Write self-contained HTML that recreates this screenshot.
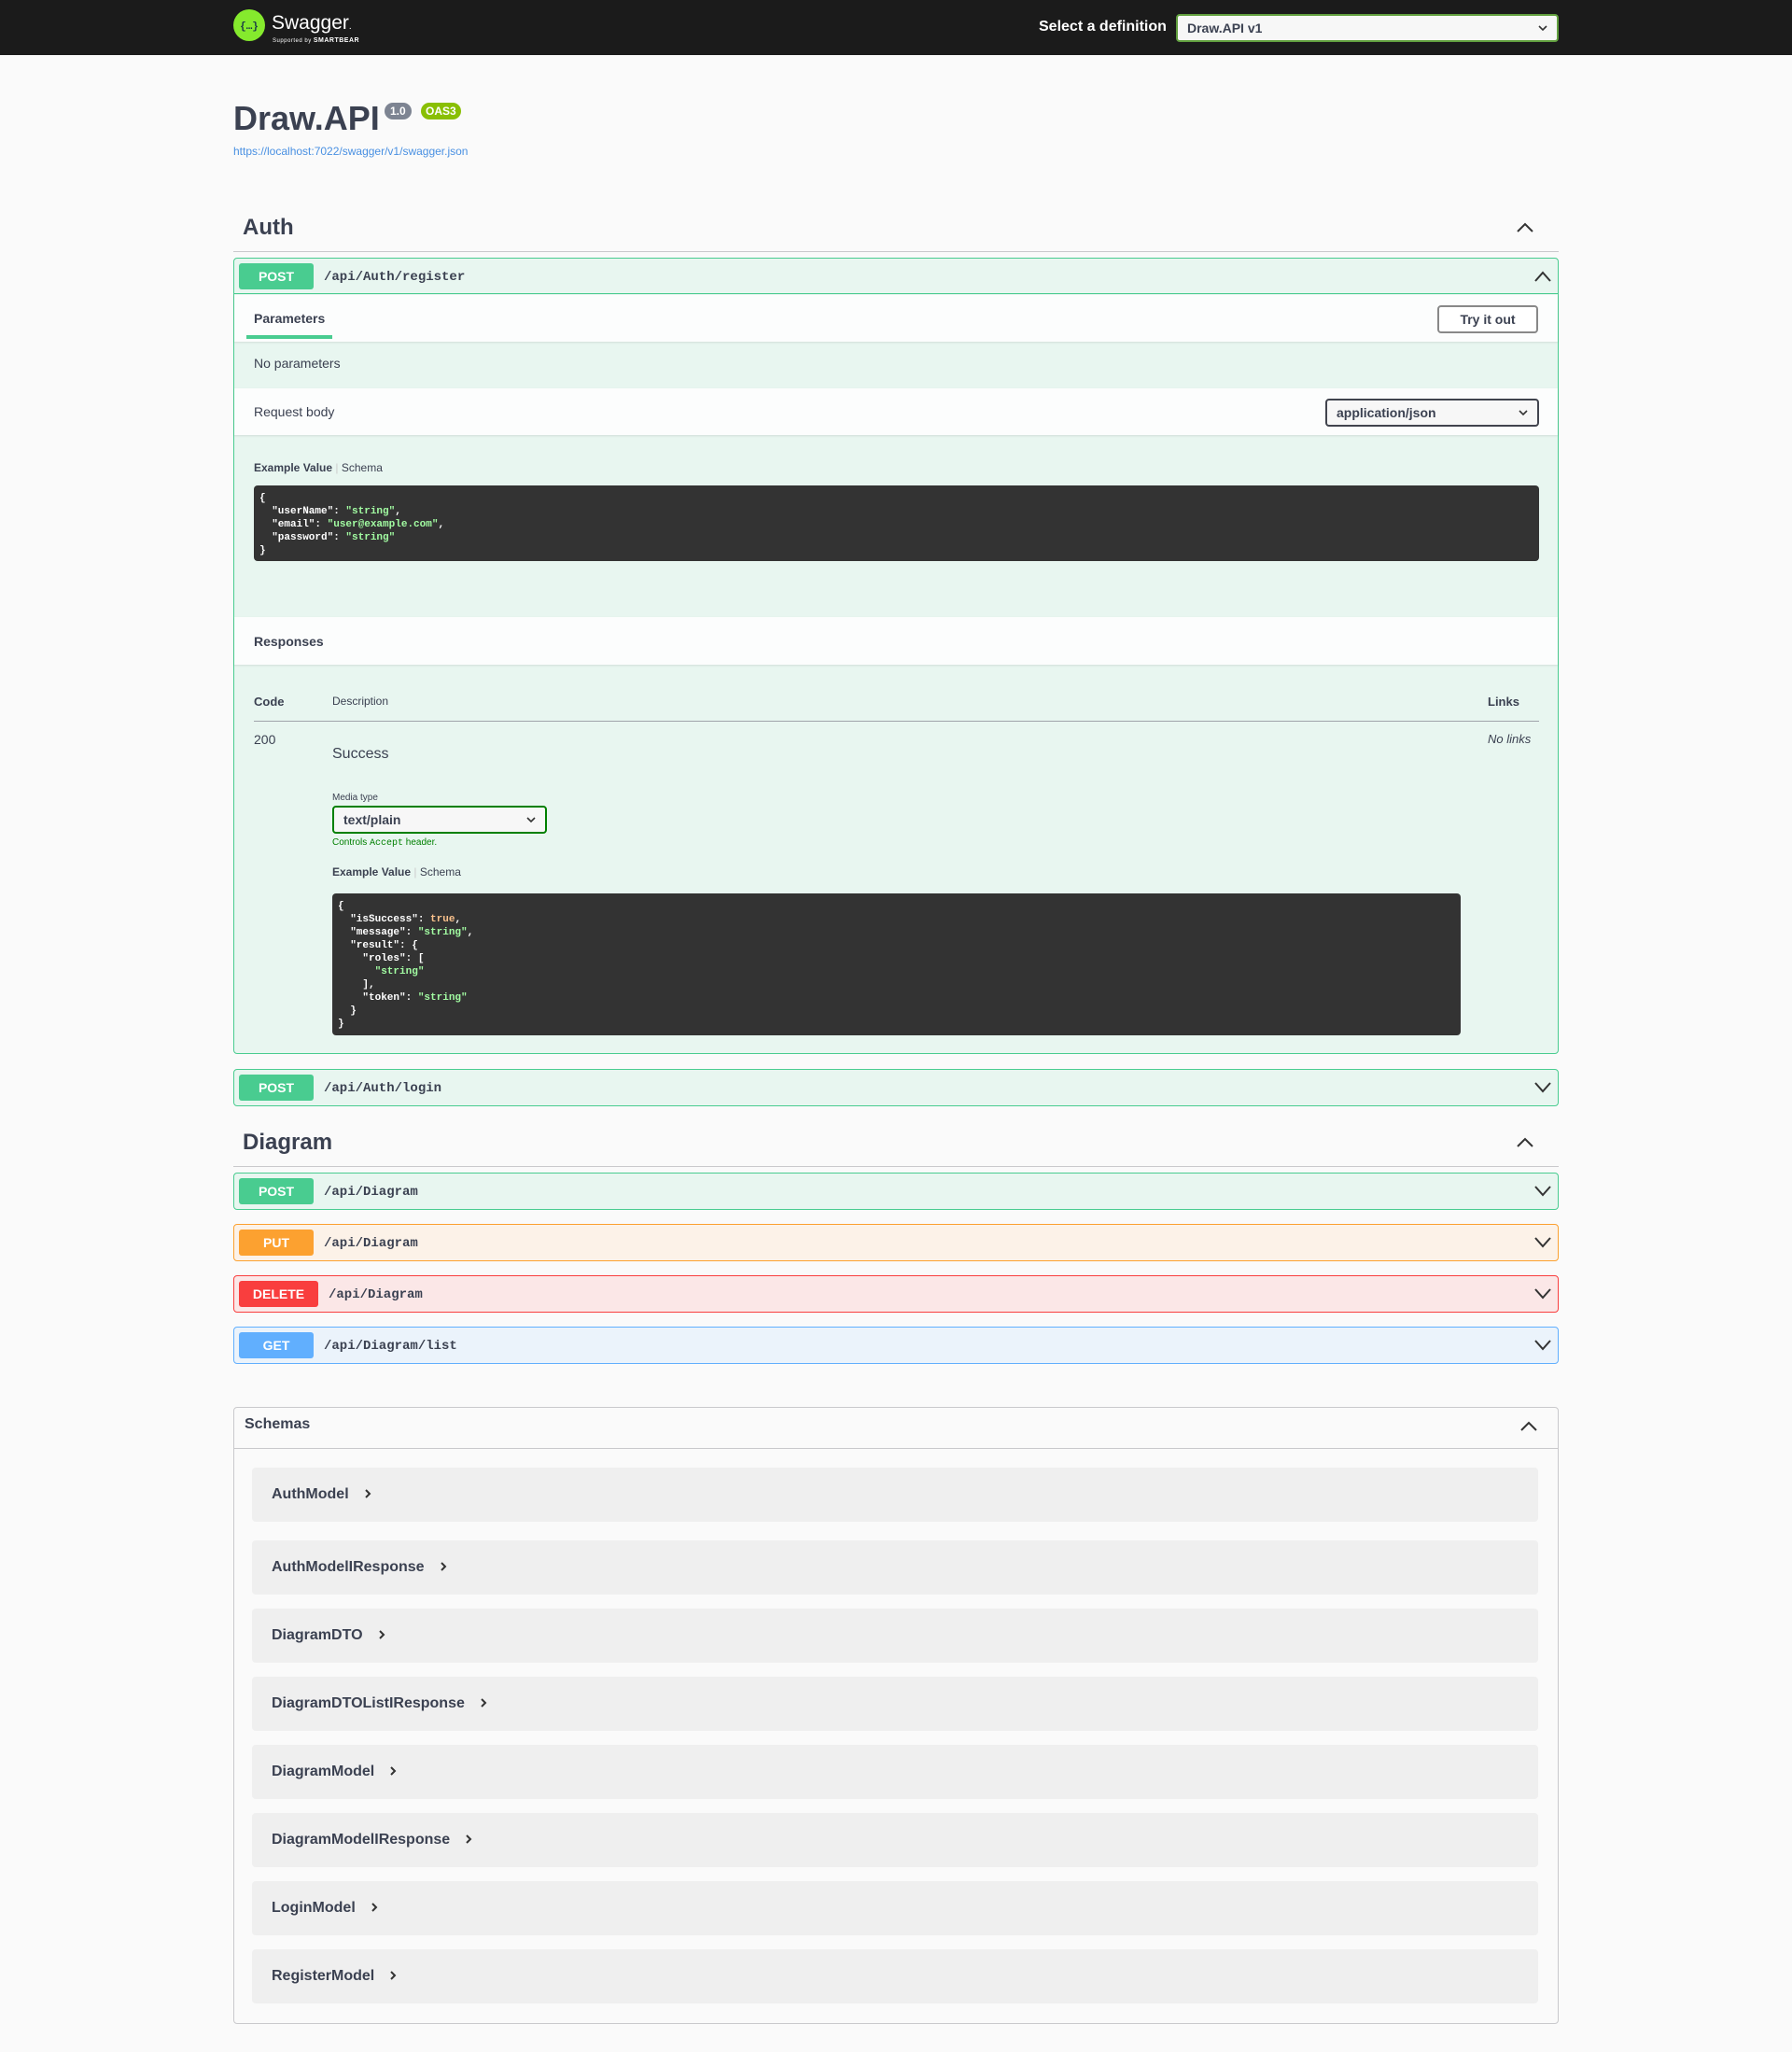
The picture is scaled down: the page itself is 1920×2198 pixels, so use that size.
<!DOCTYPE html>
<html><head><meta charset="utf-8"><style>
*{box-sizing:border-box;margin:0;padding:0}
body{width:1920px;height:2198px;background:#fafafa;font-family:"Liberation Sans",sans-serif;color:#3b4151;position:relative;overflow:hidden}
.a{position:absolute}
.mono{font-family:"Liberation Mono",monospace}
.ob{position:absolute;left:250px;width:1420px;border:1px solid;border-radius:4px}
.sum{position:absolute;left:0;right:0;top:0;height:38px}
.m{position:absolute;left:5px;top:5px;height:28px;width:80px;border-radius:3px;color:#fff;font-weight:bold;font-size:14px;text-align:center;line-height:28px}
.p{position:absolute;left:96px;top:1px;line-height:38px;font-size:14px;font-weight:bold;font-family:"Liberation Mono",monospace;color:#3b4151}
.chev{position:absolute;right:6px;top:11px}
.code{position:absolute;background:#333;border-radius:4px;color:#fff;font-family:"Liberation Mono",monospace;font-size:11px;font-weight:bold;line-height:14px;padding:7px 6px}
.g{color:#a2fca2}.o{color:#fcc28c}
.sch{position:absolute;left:270px;width:1378px;height:58px;background:#efefef;border-radius:4px;font-size:16px;font-weight:bold;line-height:58px;padding-left:21px;color:#3b4151}
.sch svg{margin-left:16px;vertical-align:-1px}
.dd{position:absolute;right:10px;top:9px}
</style></head><body>
<div class="a" style="left:0;top:0;width:1920px;height:59px;background:#1b1b1b"></div>
<svg class="a" style="left:250px;top:10px" width="34" height="34" viewBox="0 0 34 34"><circle cx="17" cy="17" r="17" fill="#85ea2d"/><text x="17" y="21" font-size="11" text-anchor="middle" fill="#173647" font-family="Liberation Mono" font-weight="bold">{…}</text></svg>
<div class="a" style="left:291px;top:13px;color:#fff;font-size:21px">Swagger<span style="font-size:10px">.</span></div>
<div class="a" style="left:292px;top:40px;color:#fff;font-size:6px;letter-spacing:.5px">Supported by <b style="font-size:7px">SMARTBEAR</b></div>
<div class="a" style="left:1113px;top:20px;color:#fff;font-size:16px;font-weight:bold">Select a definition</div>
<div class="a" style="left:1260px;top:15px;width:410px;height:30px;background:#f7f7f7;border:2px solid #62a03f;border-radius:4px;font-size:14px;font-weight:bold;line-height:26px;padding-left:10px;color:#3b4151">Draw.API v1<svg class="dd" width="10" height="8" viewBox="0 0 10 8"><path d="M1 2 L5 6 L9 2" fill="none" stroke="#333" stroke-width="1.6"/></svg></div>

<div class="a" style="left:250px;top:106px;font-size:36px;font-weight:bold">Draw.API</div>
<div class="a" style="left:412px;top:110px;background:#7d8492;color:#fff;font-size:12px;font-weight:bold;border-radius:57px;padding:2px 6px">1.0</div>
<div class="a" style="left:451px;top:110px;background:#89bf04;color:#fff;font-size:12px;font-weight:bold;border-radius:57px;padding:2px 5px">OAS3</div>
<div class="a" style="left:250px;top:155px;font-size:12px;color:#4990e2">https://localhost:7022/swagger/v1/swagger.json</div>

<div class="a" style="left:260px;top:230px;font-size:24px;font-weight:bold">Auth</div>
<svg class="a" style="left:1624px;top:236px" width="20" height="14" viewBox="0 0 20 14"><path d="M2 12 L10 4 L18 12" fill="none" stroke="#333" stroke-width="2"/></svg>
<div class="a" style="left:250px;top:269px;width:1420px;height:1px;background:#c9c9cc"></div>

<div class="ob" style="top:276px;height:853px;border-color:#49cc90;background:#e8f6f0">
 <div class="sum" style="border-bottom:1px solid #49cc90"><div class="m" style="background:#49cc90">POST</div><div class="p">/api/Auth/register</div>
 <svg class="chev" width="20" height="16" viewBox="0 0 20 16"><path d="M2 13 L10 4 L18 13" fill="none" stroke="#333" stroke-width="2"/></svg></div>
 <div class="a" style="left:0;right:0;top:39px;height:50px;background:#fcfdfd;box-shadow:0 1px 2px rgba(0,0,0,.1)"></div>
 <div class="a" style="left:21px;top:56px;font-size:14px;font-weight:bold">Parameters</div>
 <div class="a" style="left:13px;top:82px;width:92px;height:4px;background:#49cc90"></div>
 <div class="a" style="left:1289px;top:50px;width:108px;height:30px;border:2px solid #888;border-radius:4px;font-size:14px;font-weight:bold;text-align:center;line-height:26px;background:#fff">Try it out</div>
 <div class="a" style="left:21px;top:104px;font-size:14px">No parameters</div>
 <div class="a" style="left:0;right:0;top:139px;height:50px;background:#fcfdfd;box-shadow:0 1px 2px rgba(0,0,0,.1)"></div>
 <div class="a" style="left:21px;top:156px;font-size:14px">Request body</div>
 <div class="a" style="left:1169px;top:150px;width:229px;height:30px;border:2px solid #41444e;border-radius:4px;background:#f7f7f7;font-size:14px;font-weight:bold;line-height:26px;padding-left:10px">application/json<svg class="dd" width="10" height="8" viewBox="0 0 10 8"><path d="M1 2 L5 6 L9 2" fill="none" stroke="#333" stroke-width="1.6"/></svg></div>
 <div class="a" style="left:21px;top:217px;font-size:12px"><b>Example Value</b> <span style="color:#ccc">|</span> Schema</div>
 <div class="code" style="left:21px;top:243px;width:1377px;height:81px">{<br>&nbsp;&nbsp;"userName": <span class="g">"string"</span>,<br>&nbsp;&nbsp;"email": <span class="g">"user@example.com"</span>,<br>&nbsp;&nbsp;"password": <span class="g">"string"</span><br>}</div>
 <div class="a" style="left:0;right:0;top:384px;height:51px;background:#fcfdfd;box-shadow:0 1px 2px rgba(0,0,0,.1)"></div>
 <div class="a" style="left:21px;top:402px;font-size:14px;font-weight:bold">Responses</div>
 <div class="a" style="left:21px;top:467px;font-size:13px;font-weight:bold">Code</div>
 <div class="a" style="left:105px;top:467px;font-size:12px">Description</div>
 <div class="a" style="left:1343px;top:467px;font-size:13px;font-weight:bold">Links</div>
 <div class="a" style="left:21px;top:495px;width:1377px;height:1px;background:#a0a4aa"></div>
 <div class="a" style="left:21px;top:507px;font-size:14px">200</div>
 <div class="a" style="left:1343px;top:507px;font-size:13px;font-style:italic">No links</div>
 <div class="a" style="left:105px;top:522px;font-size:16px">Success</div>
 <div class="a" style="left:105px;top:572px;font-size:10px">Media type</div>
 <div class="a" style="left:105px;top:586px;width:230px;height:30px;border:2px solid #008000;border-radius:4px;background:#f7f7f7;font-size:14px;font-weight:bold;line-height:26px;padding-left:10px">text/plain<svg class="dd" width="10" height="8" viewBox="0 0 10 8"><path d="M1 2 L5 6 L9 2" fill="none" stroke="#333" stroke-width="1.6"/></svg></div>
 <div class="a" style="left:105px;top:620px;font-size:10px;color:#008000">Controls <span class="mono">Accept</span> header.</div>
 <div class="a" style="left:105px;top:650px;font-size:12px"><b>Example Value</b> <span style="color:#ccc">|</span> Schema</div>
 <div class="code" style="left:105px;top:680px;width:1209px;height:152px">{<br>&nbsp;&nbsp;"isSuccess": <span class="o">true</span>,<br>&nbsp;&nbsp;"message": <span class="g">"string"</span>,<br>&nbsp;&nbsp;"result": {<br>&nbsp;&nbsp;&nbsp;&nbsp;"roles": [<br>&nbsp;&nbsp;&nbsp;&nbsp;&nbsp;&nbsp;<span class="g">"string"</span><br>&nbsp;&nbsp;&nbsp;&nbsp;],<br>&nbsp;&nbsp;&nbsp;&nbsp;"token": <span class="g">"string"</span><br>&nbsp;&nbsp;}<br>}</div>
</div>

<div class="ob" style="top:1145px;height:40px;border-color:#49cc90;background:#e8f6f0"><div class="m" style="background:#49cc90">POST</div><div class="p">/api/Auth/login</div><svg class="chev" width="20" height="16" viewBox="0 0 20 16"><path d="M2 3 L10 12 L18 3" fill="none" stroke="#333" stroke-width="2"/></svg></div>

<div class="a" style="left:260px;top:1210px;font-size:24px;font-weight:bold">Diagram</div>
<svg class="a" style="left:1624px;top:1216px" width="20" height="14" viewBox="0 0 20 14"><path d="M2 12 L10 4 L18 12" fill="none" stroke="#333" stroke-width="2"/></svg>
<div class="a" style="left:250px;top:1249px;width:1420px;height:1px;background:#c9c9cc"></div>

<div class="ob" style="top:1256px;height:40px;border-color:#49cc90;background:#e8f6f0"><div class="m" style="background:#49cc90">POST</div><div class="p">/api/Diagram</div><svg class="chev" width="20" height="16" viewBox="0 0 20 16"><path d="M2 3 L10 12 L18 3" fill="none" stroke="#333" stroke-width="2"/></svg></div>
<div class="ob" style="top:1311px;height:40px;border-color:#fca130;background:#fcf2e8"><div class="m" style="background:#fca130">PUT</div><div class="p">/api/Diagram</div><svg class="chev" width="20" height="16" viewBox="0 0 20 16"><path d="M2 3 L10 12 L18 3" fill="none" stroke="#333" stroke-width="2"/></svg></div>
<div class="ob" style="top:1366px;height:40px;border-color:#f93e3e;background:#fbe7e7"><div class="m" style="background:#f93e3e;width:85px">DELETE</div><div class="p" style="left:101px">/api/Diagram</div><svg class="chev" width="20" height="16" viewBox="0 0 20 16"><path d="M2 3 L10 12 L18 3" fill="none" stroke="#333" stroke-width="2"/></svg></div>
<div class="ob" style="top:1421px;height:40px;border-color:#61affe;background:#ebf3fb"><div class="m" style="background:#61affe">GET</div><div class="p">/api/Diagram/list</div><svg class="chev" width="20" height="16" viewBox="0 0 20 16"><path d="M2 3 L10 12 L18 3" fill="none" stroke="#333" stroke-width="2"/></svg></div>

<div class="a" style="left:250px;top:1507px;width:1420px;height:661px;border:1px solid #c9c9cc;border-radius:4px"></div>
<div class="a" style="left:250px;top:1551px;width:1420px;height:1px;background:#c9c9cc"></div>
<div class="a" style="left:262px;top:1517px;font-size:16px;font-weight:bold">Schemas</div>
<svg class="a" style="left:1628px;top:1520px" width="20" height="14" viewBox="0 0 20 14"><path d="M2 12 L10 4 L18 12" fill="none" stroke="#333" stroke-width="2"/></svg>
<div class="sch" style="top:1572px">AuthModel<svg width="8" height="12" viewBox="0 0 8 12"><path d="M2 2 L6 6 L2 10" fill="none" stroke="#333" stroke-width="2"/></svg></div>
<div class="sch" style="top:1650px">AuthModelIResponse<svg width="8" height="12" viewBox="0 0 8 12"><path d="M2 2 L6 6 L2 10" fill="none" stroke="#333" stroke-width="2"/></svg></div>
<div class="sch" style="top:1723px">DiagramDTO<svg width="8" height="12" viewBox="0 0 8 12"><path d="M2 2 L6 6 L2 10" fill="none" stroke="#333" stroke-width="2"/></svg></div>
<div class="sch" style="top:1796px">DiagramDTOListIResponse<svg width="8" height="12" viewBox="0 0 8 12"><path d="M2 2 L6 6 L2 10" fill="none" stroke="#333" stroke-width="2"/></svg></div>
<div class="sch" style="top:1869px">DiagramModel<svg width="8" height="12" viewBox="0 0 8 12"><path d="M2 2 L6 6 L2 10" fill="none" stroke="#333" stroke-width="2"/></svg></div>
<div class="sch" style="top:1942px">DiagramModelIResponse<svg width="8" height="12" viewBox="0 0 8 12"><path d="M2 2 L6 6 L2 10" fill="none" stroke="#333" stroke-width="2"/></svg></div>
<div class="sch" style="top:2015px">LoginModel<svg width="8" height="12" viewBox="0 0 8 12"><path d="M2 2 L6 6 L2 10" fill="none" stroke="#333" stroke-width="2"/></svg></div>
<div class="sch" style="top:2088px">RegisterModel<svg width="8" height="12" viewBox="0 0 8 12"><path d="M2 2 L6 6 L2 10" fill="none" stroke="#333" stroke-width="2"/></svg></div>
</body></html>
